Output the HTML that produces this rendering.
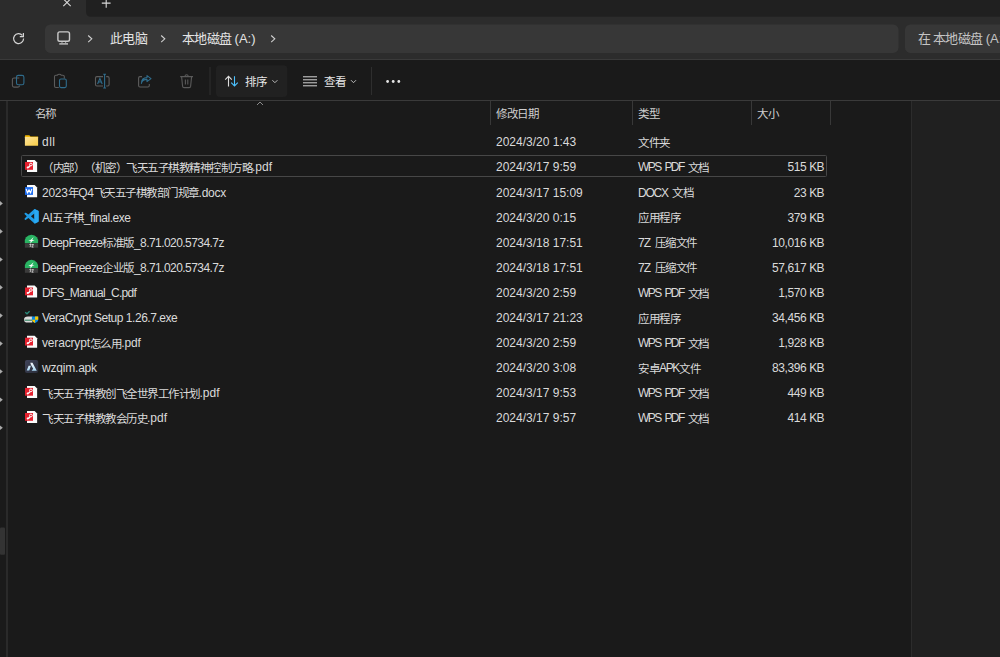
<!DOCTYPE html>
<html lang="zh-CN">
<head>
<meta charset="utf-8">
<style>
*{margin:0;padding:0;box-sizing:border-box}
html,body{width:1000px;height:657px;overflow:hidden;background:#1a1a1a}
body{position:relative;font-family:"Liberation Sans",sans-serif;color:#e2e2e2;font-size:12px}
.abs{position:absolute}
i{font-style:normal;font-size:11.5px;letter-spacing:-0.5px;text-spacing-trim:space-all}
.t{position:absolute;white-space:nowrap;line-height:14px}
.row{position:absolute;left:0;width:911px;height:25px}
.row div{position:absolute;top:0;line-height:25px;white-space:nowrap;color:#dadada}
.c1{left:42px}.c2{left:496px}.c3{left:638px}.c4{right:87px}
.row i{letter-spacing:-0.5px;position:relative;top:0.6px}
.row b{font-weight:normal;letter-spacing:-0.9px;margin-right:0.5px}
.addr i{font-size:13px;letter-spacing:-0.75px}
svg{position:absolute;left:0;top:0}
</style>
</head>
<body>
<svg width="1000" height="657" viewBox="0 0 1000 657">
<defs>
<linearGradient id="fold" x1="0" y1="0" x2="1" y2="1"><stop offset="0" stop-color="#fde39d"/><stop offset="1" stop-color="#f8cd45"/></linearGradient>
<linearGradient id="apkbg" x1="0" y1="0" x2="1" y2="1"><stop offset="0" stop-color="#40445a"/><stop offset="1" stop-color="#2a2d3a"/></linearGradient>
<linearGradient id="apkfg" x1="0" y1="0" x2="0" y2="1"><stop offset="0" stop-color="#f4f6f8"/><stop offset="1" stop-color="#a8d8f5"/></linearGradient>
</defs>
<!-- tab strip -->
<rect x="0" y="0" width="1000" height="60" fill="#2c2c2c"/>
<path d="M86 0 H1000 V16.7 H91 Q86 16.7 86 11.7z" fill="#202020"/>
<!-- close x / plus -->
<path d="M63.3 -1.2 L70.7 6.2 M70.7 -1.2 L63.3 6.2" stroke="#d8d8d8" stroke-width="1.1"/>
<path d="M101.8 3.1 H110.6 M106.2 -1.5 V7.8" stroke="#d8d8d8" stroke-width="1.1"/>
<!-- address boxes -->
<rect x="45" y="24.4" width="853.5" height="28.5" rx="5.5" fill="#373737"/>
<rect x="905" y="24.4" width="120" height="28.5" rx="5.5" fill="#373737"/>
<!-- line under address row -->
<rect x="0" y="59" width="1000" height="1" fill="#3a3a3a"/>
<!-- toolbar -->
<rect x="0" y="60" width="1000" height="40" fill="#1a1a1a"/>
<rect x="0" y="100" width="911" height="1" fill="#3a3a3a"/>
<rect x="911" y="100" width="89" height="1" fill="#3a3a3a"/>
<!-- nav pane sliver -->
<rect x="0" y="101" width="6" height="556" fill="#1a1a1a"/>
<rect x="6" y="101" width="2" height="556" fill="#2a2a2a"/>
<rect x="0" y="527.5" width="5" height="27.3" rx="1" fill="#333333"/>
<!-- right pane -->
<rect x="911" y="101" width="1" height="556" fill="#2c2c2c"/>
<rect x="912" y="101" width="88" height="556" fill="#202020"/>
<!-- refresh -->
<path d="M22.4 35.3 A5 5 0 1 0 23.6 38.6" fill="none" stroke="#d4d4d4" stroke-width="1.2"/>
<path d="M23.4 33 V36.6 H19.8" fill="none" stroke="#d4d4d4" stroke-width="1.2"/>
<!-- monitor -->
<rect x="57.9" y="31.9" width="11.6" height="9.3" rx="1.8" fill="none" stroke="#cacaca" stroke-width="1.4"/>
<path d="M59.3 43.9 H68" stroke="#bdbdbd" stroke-width="1.5"/>
<path d="M62 42.2 V43.2 M65.6 42.2 V43.2" stroke="#bdbdbd" stroke-width="1.2"/>
<!-- chevrons -->
<path d="M88.2 35.5 L91.8 38.8 L88.2 42.1" fill="none" stroke="#d0d0d0" stroke-width="1.1"/>
<path d="M161.2 35.5 L164.8 38.8 L161.2 42.1" fill="none" stroke="#d0d0d0" stroke-width="1.1"/>
<path d="M271.2 35.5 L274.8 38.8 L271.2 42.1" fill="none" stroke="#d0d0d0" stroke-width="1.1"/>
<!-- toolbar icons (disabled) -->
<g fill="none" stroke-width="1.1">
 <path d="M19.3 78 H14 Q12.4 78 12.4 79.6 V85.6 Q12.4 87.1 14 87.1 H18 Q19.6 87.1 19.6 85.6" stroke="#5c5c5c"/>
 <rect x="16.5" y="75.4" width="7.4" height="9.4" rx="1.8" stroke="#2f6c8c"/>
 <path d="M58.8 87.5 H55.9 Q54.5 87.5 54.5 86 V76.5 Q54.5 75.2 55.9 75.2 H57.3 Q57.8 74.2 59.3 74.2 Q60.8 74.2 61.3 75.2 H62.8 Q64.3 75.2 64.3 76.5 V78.5" stroke="#5c5c5c"/>
 <rect x="59.5" y="79" width="6.8" height="8.6" rx="1.5" stroke="#2f6c8c"/>
 <path d="M103 76.6 H96.9 Q95.5 76.6 95.5 78 V84.5 Q95.5 86 96.9 86 H103 M106.2 76.6 H107.7 Q109.1 76.6 109.1 78 V84.5 Q109.1 86 107.7 86 H106.2" stroke="#5c5c5c"/>
 <path d="M104.6 74.2 V88 M103.2 74.2 H106 M103.2 88 H106" stroke="#2f6c8c"/>
 <path d="M97.6 84 L99.9 78.4 L102.2 84 M98.5 82 H101.3" stroke="#2f6c8c"/>
 <path d="M142 76.6 H140 Q138.6 76.6 138.6 78 V85.6 Q138.6 87 140 87 H147.9 Q149.3 87 149.3 85.6 V84" stroke="#5c5c5c"/>
 <path d="M141.4 83.4 Q142 79.4 147 79.4 V81.6 L151 78.6 L147 75.6 V77.6 Q141.6 77.6 141.4 83.4z" stroke="#2f6c8c" stroke-linejoin="round"/>
 <path d="M180.2 76.6 H193 M184.8 76.6 Q185.2 74.7 186.6 74.7 Q188 74.7 188.4 76.6 M181.6 76.6 L182.6 86.4 Q182.8 87.6 184 87.6 H189.2 Q190.4 87.6 190.6 86.4 L191.6 76.6 M185.4 79.6 V84.6 M187.8 79.6 V84.6" stroke="#5a5a5a"/>
</g>
<!-- separators -->
<rect x="209.5" y="67" width="1" height="28" fill="#2e2e2e"/>
<rect x="371" y="67" width="1" height="28" fill="#2e2e2e"/>
<!-- sort button -->
<rect x="216" y="65.2" width="71.3" height="31.8" rx="4" fill="#212121"/>
<path d="M228.5 76.4 V86.4 M225.2 79.6 L228.5 76.3 L231.8 79.6" fill="none" stroke="#dedede" stroke-width="1.1"/>
<path d="M234.5 76.2 V86.1 M231.2 82.7 L234.5 86 L237.8 82.7" fill="none" stroke="#4cc2ff" stroke-width="1.1"/>
<path d="M272.4 80.2 L274.9 82.7 L277.4 80.2" fill="none" stroke="#bdbdbd" stroke-width="1"/>
<!-- view -->
<path d="M303 76.8 H317 M303 79.8 H317 M303 82.8 H317 M303 85.8 H317" stroke="#d6d6d6" stroke-width="1"/>
<path d="M351 80.2 L353.5 82.7 L356 80.2" fill="none" stroke="#bdbdbd" stroke-width="1"/>
<circle cx="387.6" cy="81.5" r="1.4" fill="#e6e6e6"/>
<circle cx="393.2" cy="81.5" r="1.4" fill="#e6e6e6"/>
<circle cx="398.8" cy="81.5" r="1.4" fill="#e6e6e6"/>
<!-- header dividers -->
<rect x="490" y="101" width="1" height="24" fill="#383838"/>
<rect x="632" y="101" width="1" height="24" fill="#383838"/>
<rect x="751" y="101" width="1" height="24" fill="#383838"/>
<rect x="830" y="101" width="1" height="24" fill="#383838"/>
<path d="M257 105 L260 102 L263 105" fill="none" stroke="#8a8a8a" stroke-width="1"/>
<!-- focus rect -->
<rect x="21.5" y="155.5" width="805" height="21" rx="1" fill="none" stroke="#474747" stroke-width="1"/>
<!-- nav chevrons partial -->
<g fill="#aaaaaa">
<path d="M0 201.1 L2.8 203.4 L0 205.7z"/>
<path d="M0 229.1 L2.8 231.4 L0 233.7z"/>
<path d="M0 257.2 L2.8 259.5 L0 261.8z"/>
<path d="M0 285.1 L2.8 287.4 L0 289.7z"/>
<path d="M0 313.3 L2.8 315.6 L0 317.9z"/>
<path d="M0 341.3 L2.8 343.6 L0 345.9z"/>
<path d="M0 369.2 L2.8 371.5 L0 373.8z"/>
<path d="M0 397.5 L2.8 399.8 L0 402.1z"/>
<path d="M0 425.4 L2.8 427.7 L0 430.0z"/>

</g>
<path d="M24.9 136.00 q0-0.8 0.8-0.8 h3.6 l1.2 1.2 h7.4 q0.2 0 0.2 0.2 v1.2 h-13.2z" fill="#f2b705"/>
<rect x="24.9" y="136.90" width="13.2" height="8.9" rx="0.6" fill="url(#fold)"/>
<path d="M27 160.00 h7.6 l2.5 2.5 v9.6 h-10.1z" fill="#fafafa"/>
<rect x="25" y="162.00" width="8" height="7.8" fill="#e5202e"/><circle cx="30.9" cy="164.50" r="1.35" fill="none" stroke="#fff" stroke-width="0.95"/><path d="M30.1 165.60 Q29.4 167.00 27.6 167.60" stroke="#fff" stroke-width="1.3" fill="none"/><circle cx="27.7" cy="167.50" r="1" fill="#fff"/>
<path d="M27 185.10 h7.6 l2.5 2.5 v9.6 h-10.1z" fill="#fafafa"/>
<rect x="25" y="187.10" width="8" height="7.8" fill="#1f6ef0"/><path d="M26.2 188.80 L27.5 193.10 L29 189.80 L30.5 193.10 L31.8 188.80" fill="none" stroke="#fff" stroke-width="1.15" stroke-linejoin="round"/>
<path d="M34.2 209.30 Q34.8 208.90 35.4 209.20 L38.2 210.70 Q38.6 211.00 38.6 211.40 V221.20 Q38.6 221.60 38.2 221.90 L35.4 223.40 Q34.8 223.70 34.2 223.30 L28.4 218.00 L26 219.80 Q25.5 220.10 25 219.70 L24.6 219.30 Q24.3 218.80 24.7 218.40 L26.8 216.30 L24.7 214.20 Q24.3 213.80 24.6 213.30 L25 212.90 Q25.5 212.50 26 212.80 L28.4 214.60 Z M34.4 213.40 L30.9 216.30 L34.4 219.20 Z" fill="#1f9ce6" fill-rule="evenodd"/>
<path d="M34.4 209.20 L38.2 210.80 Q38.6 211.00 38.6 211.40 V221.20 Q38.6 221.60 38.2 221.80 L34.4 223.40 Z" fill="#2aa9f2"/>
<path d="M24.85 243.20 A6.83 6.83 0 1 1 38.1 243.20 z" fill="#2ab463"/>
<rect x="24.85" y="243.20" width="13.25" height="4.5" fill="#3b3b3b"/>
<path d="M33.6 237.10 L32.2 240.10 L34.6 240.40 L32 241.20 L30.4 243.90 L30.6 241.10 L28.3 240.70 L30.9 239.70z" fill="#ffffff"/>
<path d="M29.4 244.50 h1.7 l-1.1 2.6 M31.8 244.50 h1.7 l-1.7 2.6 h1.7" stroke="#e0e0e0" stroke-width="0.8" fill="none"/>
<path d="M24.85 268.30 A6.83 6.83 0 1 1 38.1 268.30 z" fill="#2ab463"/>
<rect x="24.85" y="268.30" width="13.25" height="4.5" fill="#3b3b3b"/>
<path d="M33.6 262.20 L32.2 265.20 L34.6 265.50 L32 266.30 L30.4 269.00 L30.6 266.20 L28.3 265.80 L30.9 264.80z" fill="#ffffff"/>
<path d="M29.4 269.60 h1.7 l-1.1 2.6 M31.8 269.60 h1.7 l-1.7 2.6 h1.7" stroke="#e0e0e0" stroke-width="0.8" fill="none"/>
<path d="M27 285.50 h7.6 l2.5 2.5 v9.6 h-10.1z" fill="#fafafa"/>
<rect x="25" y="287.50" width="8" height="7.8" fill="#e5202e"/><circle cx="30.9" cy="290.00" r="1.35" fill="none" stroke="#fff" stroke-width="0.95"/><path d="M30.1 291.10 Q29.4 292.50 27.6 293.10" stroke="#fff" stroke-width="1.3" fill="none"/><circle cx="27.7" cy="293.00" r="1" fill="#fff"/>
<path d="M25.2 312.20 l1.8 1.6 l2.6-2.6" stroke="#2a8a7a" stroke-width="1.3" fill="none"/>
<path d="M24 319.40 q0-2.6 4-2.8 h4.3 v6 h-4.5 q-3.8 0-3.8-3.2z" fill="#dcdcdc"/>
<path d="M24.5 320.20 h7.5" stroke="#3f8a6a" stroke-width="1.2"/>
<path d="M31.9 316.60 h6.3 v3 q0 2.5-3.15 3.4 q-3.15-0.9-3.15-3.4z" fill="#0a8ae6"/>
<path d="M35.05 316.60 h3.15 v3.1 h-3.15z M31.9 319.70 h3.15 v3.3 q-2.6-1-3.15-3.3z" fill="#f6c800"/>
<path d="M27 335.70 h7.6 l2.5 2.5 v9.6 h-10.1z" fill="#fafafa"/>
<rect x="25" y="337.70" width="8" height="7.8" fill="#e5202e"/><circle cx="30.9" cy="340.20" r="1.35" fill="none" stroke="#fff" stroke-width="0.95"/><path d="M30.1 341.30 Q29.4 342.70 27.6 343.30" stroke="#fff" stroke-width="1.3" fill="none"/><circle cx="27.7" cy="343.20" r="1" fill="#fff"/>
<rect x="25" y="359.90" width="13.2" height="13.2" rx="2" fill="url(#apkbg)"/>
<path d="M26.7 370.60 L29.3 370.60 L30.9 365.80 L28.6 365.80Z M30.3 362.80 L32.5 362.80 L36.8 370.70 L31.6 370.70 L33.2 368.80 L31 365.00Z" fill="url(#apkfg)"/>
<path d="M27 385.90 h7.6 l2.5 2.5 v9.6 h-10.1z" fill="#fafafa"/>
<rect x="25" y="387.90" width="8" height="7.8" fill="#e5202e"/><circle cx="30.9" cy="390.40" r="1.35" fill="none" stroke="#fff" stroke-width="0.95"/><path d="M30.1 391.50 Q29.4 392.90 27.6 393.50" stroke="#fff" stroke-width="1.3" fill="none"/><circle cx="27.7" cy="393.40" r="1" fill="#fff"/>
<path d="M27 411.00 h7.6 l2.5 2.5 v9.6 h-10.1z" fill="#fafafa"/>
<rect x="25" y="413.00" width="8" height="7.8" fill="#e5202e"/><circle cx="30.9" cy="415.50" r="1.35" fill="none" stroke="#fff" stroke-width="0.95"/><path d="M30.1 416.60 Q29.4 418.00 27.6 418.60" stroke="#fff" stroke-width="1.3" fill="none"/><circle cx="27.7" cy="418.50" r="1" fill="#fff"/>
</svg>

<div class="t addr" style="left:110px;top:32px;font-size:13px;color:#e4e4e4"><i>此电脑</i></div>
<div class="t addr" style="left:182px;top:32px;font-size:13px;color:#e4e4e4"><i>本地磁盘</i> (A:)</div>
<div class="t addr" style="left:918px;top:32px;font-size:13px;color:#c4c4c4"><i>在 本地磁盘</i> (A:)</div>

<div class="t" style="left:245px;top:75px;color:#e6e6e6"><i>排序</i></div>
<div class="t" style="left:324px;top:75px;color:#e6e6e6"><i>查看</i></div>

<div class="t" style="left:34.5px;top:107px;color:#cfcfcf"><i>名称</i></div>
<div class="t" style="left:496px;top:107px;color:#cfcfcf"><i>修改日期</i></div>
<div class="t" style="left:638px;top:107px;color:#cfcfcf"><i>类型</i></div>
<div class="t" style="left:757px;top:107px;color:#cfcfcf"><i>大小</i></div>

<div class="row" style="top:130.35px"><div class="c1" style="letter-spacing:0.5px">dll</div><div class="c2">2024/3/20 1:43</div><div class="c3" style="letter-spacing:0px;word-spacing:2.2px"><i>文件夹</i></div><div class="c4" style="letter-spacing:-0.4px"></div></div>
<div class="row" style="top:155.45px"><div class="c1" style="letter-spacing:0px"><i>（内部）（机密）飞天五子棋教精神控制方略</i>.pdf</div><div class="c2">2024/3/17 9:59</div><div class="c3" style="letter-spacing:-1.6px;word-spacing:2.2px">WPS PDF <i>文档</i></div><div class="c4" style="letter-spacing:-0.4px">515 <b>KB</b></div></div>
<div class="row" style="top:180.55px"><div class="c1" style="letter-spacing:-0.27px">2023<i>年</i>Q4<i>飞天五子棋教部门规章</i>.docx</div><div class="c2">2024/3/17 15:09</div><div class="c3" style="letter-spacing:-1.2px;word-spacing:2.2px">DOCX <i>文档</i></div><div class="c4" style="letter-spacing:-0.4px">23 <b>KB</b></div></div>
<div class="row" style="top:205.65px"><div class="c1" style="letter-spacing:-0.48px">AI<i>五子棋</i>_final.exe</div><div class="c2">2024/3/20 0:15</div><div class="c3" style="letter-spacing:0px;word-spacing:2.2px"><i>应用程序</i></div><div class="c4" style="letter-spacing:-0.4px">379 <b>KB</b></div></div>
<div class="row" style="top:230.75px"><div class="c1" style="letter-spacing:-0.56px">DeepFreeze<i>标准版</i>_8.71.020.5734.7z</div><div class="c2">2024/3/18 17:51</div><div class="c3" style="letter-spacing:-0.9px;word-spacing:2.2px">7Z <i>压缩文件</i></div><div class="c4" style="letter-spacing:-0.4px">10,016 <b>KB</b></div></div>
<div class="row" style="top:255.85px"><div class="c1" style="letter-spacing:-0.56px">DeepFreeze<i>企业版</i>_8.71.020.5734.7z</div><div class="c2">2024/3/18 17:51</div><div class="c3" style="letter-spacing:-0.9px;word-spacing:2.2px">7Z <i>压缩文件</i></div><div class="c4" style="letter-spacing:-0.4px">57,617 <b>KB</b></div></div>
<div class="row" style="top:280.95px"><div class="c1" style="letter-spacing:-0.7px">DFS_Manual_C.pdf</div><div class="c2">2024/3/20 2:59</div><div class="c3" style="letter-spacing:-1.6px;word-spacing:2.2px">WPS PDF <i>文档</i></div><div class="c4" style="letter-spacing:-0.4px">1,570 <b>KB</b></div></div>
<div class="row" style="top:306.05px"><div class="c1" style="letter-spacing:-0.47px">VeraCrypt Setup 1.26.7.exe</div><div class="c2">2024/3/17 21:23</div><div class="c3" style="letter-spacing:0px;word-spacing:2.2px"><i>应用程序</i></div><div class="c4" style="letter-spacing:-0.4px">34,456 <b>KB</b></div></div>
<div class="row" style="top:331.15px"><div class="c1" style="letter-spacing:-0.17px">veracrypt<i>怎么用</i>.pdf</div><div class="c2">2024/3/20 2:59</div><div class="c3" style="letter-spacing:-1.6px;word-spacing:2.2px">WPS PDF <i>文档</i></div><div class="c4" style="letter-spacing:-0.4px">1,928 <b>KB</b></div></div>
<div class="row" style="top:356.25px"><div class="c1" style="letter-spacing:-0.2px">wzqim.apk</div><div class="c2">2024/3/20 3:08</div><div class="c3" style="letter-spacing:-1.33px;word-spacing:2.2px"><i>安卓</i>APK<i>文件</i></div><div class="c4" style="letter-spacing:-0.4px">83,396 <b>KB</b></div></div>
<div class="row" style="top:381.35px"><div class="c1" style="letter-spacing:0px"><i>飞天五子棋教创飞全世界工作计划</i>.pdf</div><div class="c2">2024/3/17 9:53</div><div class="c3" style="letter-spacing:-1.6px;word-spacing:2.2px">WPS PDF <i>文档</i></div><div class="c4" style="letter-spacing:-0.4px">449 <b>KB</b></div></div>
<div class="row" style="top:406.45px"><div class="c1" style="letter-spacing:0px"><i>飞天五子棋教教会历史</i>.pdf</div><div class="c2">2024/3/17 9:57</div><div class="c3" style="letter-spacing:-1.6px;word-spacing:2.2px">WPS PDF <i>文档</i></div><div class="c4" style="letter-spacing:-0.4px">414 <b>KB</b></div></div>
</body>
</html>
